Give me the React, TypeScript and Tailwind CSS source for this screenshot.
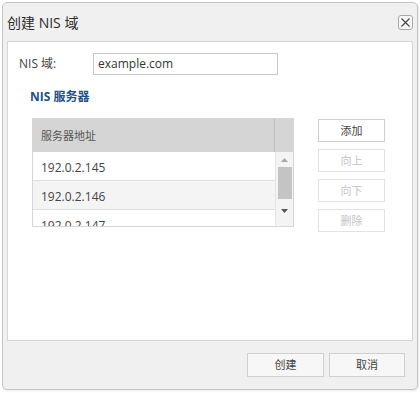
import React from 'react';

const font = "font-['Open_Sans','Noto_Sans_CJK_SC',sans-serif]";

const servers = ['192.0.2.145', '192.0.2.146', '192.0.2.147'];

const SideButton = ({ label, disabled }: { label: string; disabled?: boolean }) => (
  <button
    className={
      'h-[23px] w-[67px] border bg-white text-[11px] leading-none ' +
      (disabled ? 'border-[#e2e2e2] text-[#c4c4c4]' : 'border-[#cfcfcf] text-[#444]')
    }
  >
    {label}
  </button>
);

const App = () => {
  return (
    <div className={`w-[420px] h-[393px] bg-white p-[2px] ${font}`}>
      {/* 对话框外框 */}
      <div className="flex h-[388px] w-[416px] flex-col rounded-[5px] border border-[#c4c4c4] bg-[#f0f0f0] shadow-[1px_1px_2px_rgba(0,0,0,0.08)]">
        {/* 标题栏 */}
        <div className="flex h-[38px] items-center justify-between pl-[4px] pr-[4px]">
          <span className="text-[14px] text-[#2b2b2b]">创建 NIS 域</span>
          <button className="flex h-[15px] w-[15px] items-center justify-center rounded-[3px] border border-[#a8a8a8] bg-[#f7f7f7]">
            <svg width="9" height="9" viewBox="0 0 9 9">
              <path d="M0.5 0.5 L8.5 8.5 M8.5 0.5 L0.5 8.5" stroke="#444" strokeWidth="1.1" />
            </svg>
          </button>
        </div>

        {/* 内容面板 */}
        <div className="mx-[4px] h-[300px] border border-[#d4d4d4] bg-white">
          <div className="mt-[11px] flex items-center pl-[11px]">
            <span className="w-[74px] text-[12px] text-[#444]">NIS 域:</span>
            <div className="flex h-[22px] w-[185px] items-center border border-[#c6c6c6] px-[4px] text-[12px] text-[#333]">
              example.com
            </div>
          </div>

          <div className="mt-[13px] pl-[22px] text-[12px] font-bold text-[#21508a]">NIS 服务器</div>

          <div className="mt-[12px] flex pl-[24px]">
            {/* 服务器列表 */}
            <div className="h-[109px] w-[262px] border border-[#d6d6d6] bg-white">
              <div className="flex h-[33px] bg-[#d5d5d5]">
                <div className="flex flex-1 items-center pl-[8px] pt-[2px] text-[11px] text-[#555]">服务器地址</div>
                <div className="w-[19px] border-l border-[#bcbcbc]" />
              </div>
              <div className="flex h-[74px] overflow-hidden">
                <div className="flex-1">
                  {servers.map((s, i) => (
                    <div
                      key={s}
                      className={
                        'flex h-[29px] items-center border-b border-[#dedede] pl-[8px] pt-[4px] text-[12px] text-[#444] ' +
                        (i % 2 === 1 ? 'bg-[#f4f4f4]' : 'bg-white')
                      }
                    >
                      {s}
                    </div>
                  ))}
                </div>
                <div className="flex w-[18px] flex-col items-center border-l border-[#e4e4e4] bg-[#f4f4f4]">
                  <svg width="7" height="4" viewBox="0 0 7 4" className="mt-[6px]">
                    <path d="M0 4 L3.5 0 L7 4 Z" fill="#a8a8a8" />
                  </svg>
                  <div className="mt-[5px] h-[32px] w-[14px] bg-[#c4c4c4]" />
                  <svg width="7" height="4" viewBox="0 0 7 4" className="mt-[10px]">
                    <path d="M0 0 L3.5 4 L7 0 Z" fill="#555" />
                  </svg>
                </div>
              </div>
            </div>

            {/* 操作按钮 */}
            <div className="ml-[24px] mt-[1px] flex flex-col gap-[7px]">
              <SideButton label="添加" />
              <SideButton label="向上" disabled />
              <SideButton label="向下" disabled />
              <SideButton label="删除" disabled />
            </div>
          </div>
        </div>

        {/* 底部按钮 */}
        <div className="mt-[12px] flex justify-end gap-[5px] pr-[12px]">
          <button className="h-[24px] w-[77px] border border-[#cfcfcf] bg-[#f7f7f7] text-[11px] text-[#444]">创建</button>
          <button className="h-[24px] w-[76px] border border-[#cfcfcf] bg-[#f7f7f7] text-[11px] text-[#444]">取消</button>
        </div>
      </div>
    </div>
  );
};

export default App;
